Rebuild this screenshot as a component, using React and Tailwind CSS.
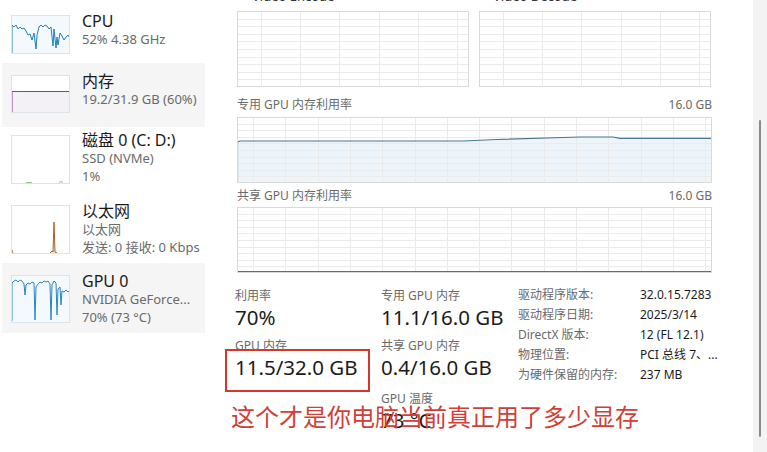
import React from 'react';

const FONT = "font-['Noto_Sans','Noto_Sans_CJK_SC',sans-serif]";

// light grid used by every graph on the GPU page
const Grid = ({ w, h, offset, step, rows = 10, children, under }) => {
  const vx = [];
  for (let x = offset; x < w - 1; x += step) vx.push(Math.round(x) + 0.5);
  const hy = [];
  for (let i = 1; i < rows; i++) hy.push(Math.round((h * i) / rows) + 0.5);
  return (
    <svg width={w} height={h} className="block">
      {under}
      {hy.map((y) => (
        <line key={'h' + y} x1="0" x2={w} y1={y} y2={y} stroke="#ebebeb" strokeWidth="1" />
      ))}
      {vx.map((x) => (
        <line key={'v' + x} x1={x} x2={x} y1="0" y2={h} stroke="#ebebeb" strokeWidth="1" />
      ))}
      {children}
      <rect x="0.5" y="0.5" width={w - 1} height={h - 1} fill="none" stroke="#d9d9d9" />
    </svg>
  );
};

const Thumb = ({ h, className, children }) => (
  <svg width="59" height={h} className={`block shrink-0 ${className}`}>
    {children}
    <rect x="0.5" y="0.5" width="58" height={h - 1} fill="none" stroke="#dde3e8" />
  </svg>
);

const cpuPts = '1,39 1,10 3,12 5,10 7,14 9,12 11,14 13,13 15,16 17,20 19,19 21,25 23,18 25,34 26,20 28,12 30,10 32,12 34,10 36,11 38,14 40,12 42,31 43,14 45,33 46,22 47,30 49,18 51,21 53,25 55,22 57,20 58,22';
const gpuPts = '1,46 1,8 3,6 5,5 7,7 9,5 11,6 13,9 14,20 15,10 17,8 19,9 21,7 23,8 24,45 25,12 27,9 29,7 31,8 33,6 35,7 37,6 39,9 40,45 41,10 43,6 45,8 46,40 47,14 49,12 50,30 51,16 53,17 55,15 57,17 58,16';

const items = [
  {
    title: 'CPU',
    sub: ['52% 4.38 GHz'],
    box: 'h-[63px]',
    thumbMt: 'mt-[15px]',
    textMt: 'mt-[12px]',
    thumb: (
      <Thumb h={39} className="bg-[#f4f9fd]">
        <polyline points={cpuPts} fill="none" stroke="#1f80b8" strokeWidth="1" />
      </Thumb>
    ),
  },
  {
    title: '内存',
    sub: ['19.2/31.9 GB (60%)'],
    box: 'h-[64px] bg-[#f5f5f5]',
    thumbMt: 'mt-[12px]',
    textMt: 'mt-[9px]',
    thumb: (
      <Thumb h={38} className="bg-white">
        <rect x="1" y="16" width="57" height="21" fill="#f3f1f5" />
        <polyline points="1,38 1,16.5 58,16.5" fill="none" stroke="#8b3d9e" strokeWidth="1" />
      </Thumb>
    ),
  },
  {
    title: '磁盘 0 (C: D:)',
    sub: ['SSD (NVMe)', '1%'],
    box: 'h-[70px]',
    thumbMt: 'mt-[8px]',
    textMt: 'mt-[4px]',
    thumb: (
      <Thumb h={49} className="bg-white">
        <polyline points="15,47.5 17,47.5 21,47.5" fill="none" stroke="#9bbf8a" strokeWidth="1" />
        <polyline points="48,47.5 50,46.5 52,47.5" fill="none" stroke="#9bbf8a" strokeWidth="1" />
      </Thumb>
    ),
  },
  {
    title: '以太网',
    sub: ['以太网', '发送: 0 接收: 0 Kbps'],
    box: 'h-[66px]',
    thumbMt: 'mt-[8px]',
    textMt: 'mt-[5px]',
    thumb: (
      <Thumb h={49} className="bg-white">
        <polyline points="1,48 1,45 2,48" fill="none" stroke="#c98a55" strokeWidth="1" />
        <polyline points="39,48 41,46 42,47 43,17 44,47 46,48" fill="#f3e3d3" stroke="#a8622a" strokeWidth="1" />
      </Thumb>
    ),
  },
  {
    title: 'GPU 0',
    sub: ['NVIDIA GeForce...', '70% (73 °C)'],
    box: 'h-[70px] bg-[#f5f5f5]',
    thumbMt: 'mt-[12px]',
    textMt: 'mt-[9px]',
    thumb: (
      <Thumb h={48} className="bg-[#f4f9fd]">
        <polyline points={gpuPts} fill="none" stroke="#2a86bf" strokeWidth="1" />
      </Thumb>
    ),
  },
];

const Sidebar = () => (
  <div className="w-[205px] shrink-0">
    {items.map((it) => (
      <div key={it.title} className={`ml-[2px] flex pl-[9px] gap-[12px] ${it.box}`}>
        <div className={it.thumbMt}>{it.thumb}</div>
        <div className={it.textMt}>
          <div className="text-[16px] leading-[18px] text-[#1a1a1a]">{it.title}</div>
          {it.sub.map((s) => (
            <div key={s} className="text-[13px] leading-[18px] text-[#6a6a6a] whitespace-nowrap">{s}</div>
          ))}
        </div>
      </div>
    ))}
  </div>
);

const dedicatedPts = '0.5,66 0.5,25 3,24 226,24 260,22.5 326,20.5 343,20 376,20 383,21.3 475,21.3';

const Stat = ({ label, value, className = '' }) => (
  <div className={className}>
    <div className="text-[12px] leading-[16px] text-[#6a6a6a]">{label}</div>
    <div className="text-[20.5px] leading-[26px] text-[#1b1b1b] whitespace-nowrap">{value}</div>
  </div>
);

const details = [
  ['驱动程序版本:', '32.0.15.7283'],
  ['驱动程序日期:', '2025/3/14'],
  ['DirectX 版本:', '12 (FL 12.1)'],
  ['物理位置:', 'PCI 总线 7、...'],
  ['为硬件保留的内存:', '237 MB'],
];

export default function App() {
  return (
    <div className={`relative flex w-[767px] h-[452px] overflow-hidden bg-white ${FONT}`}>
      <Sidebar />

      <div className="flex-1 pl-[32px]">
        <div className="w-[475px]">
          {/* engine graphs (scrolled, titles cut off) */}
          <div className="-mt-[12px] flex gap-[10px] text-[13px] leading-[16px] text-[#333]">
            <div className="w-[232px] pl-[15px]">Video Encode</div>
            <div className="w-[232px] pl-[14px]">Video Decode</div>
          </div>
          <div className="mt-[7px] flex gap-[10px]">
            <Grid w={232} h={76} offset={24} step={39.2} />
            <Grid w={232} h={76} offset={24} step={39.2} />
          </div>

          <div className="mt-[10px] flex justify-between text-[12px] leading-[16px] text-[#6a6a6a]">
            <span>专用 GPU 内存利用率</span>
            <span>16.0 GB</span>
          </div>
          <div className="mt-[4px]">
            <Grid
              w={475}
              h={66}
              offset={16}
              step={32.3}
              under={<polygon points={dedicatedPts + ' 475,66'} fill="#edf5fb" />}
            >
              <polyline points={dedicatedPts} fill="none" stroke="#4a7591" strokeWidth="1.2" />
            </Grid>
          </div>

          <div className="mt-[5px] flex justify-between text-[12px] leading-[16px] text-[#6a6a6a]">
            <span>共享 GPU 内存利用率</span>
            <span>16.0 GB</span>
          </div>
          <div className="mt-[3px]">
            <Grid w={475} h={66} offset={16} step={32.3}>
              <line x1="0" x2="475" y1="64.5" y2="64.5" stroke="#4a7591" strokeWidth="1.2" />
            </Grid>
          </div>

          {/* stats */}
          <div className="mt-[15px] -ml-[2px] flex items-start">
            <div className="w-[146px] shrink-0">
              <Stat label="利用率" value="70%" />
              <Stat label="GPU 内存" value="11.5/32.0 GB" className="mt-[8px]" />
            </div>
            <div className="w-[137px] shrink-0">
              <Stat label="专用 GPU 内存" value="11.1/16.0 GB" />
              <Stat label="共享 GPU 内存" value="0.4/16.0 GB" className="mt-[8px]" />
              <Stat label="GPU 温度" value="73 °C" className="mt-[11px]" />
            </div>
            <div className="-mt-[3px] shrink-0 text-[12px] leading-[20px]">
              {details.map(([k, v]) => (
                <div key={k} className="flex">
                  <span className="w-[122px] text-[#6a6a6a]">{k}</span>
                  <span className="text-[#1b1b1b] whitespace-nowrap">{v}</span>
                </div>
              ))}
            </div>
          </div>
        </div>
      </div>

      {/* scrollbar */}
      <div className="w-[14px] shrink-0 bg-[#f3f3f3] flex justify-center">
        <div className="mt-[120px] h-[317px] w-[2px] rounded-full bg-[#8a8a8a]" />
      </div>

      {/* annotation drawn over the screenshot */}
      <div className="absolute left-[225px] top-[349px] w-[145px] h-[43px] border-2 border-[#d8362c]" />
      <div className="absolute left-[231px] top-[404px] text-[24px] leading-[24px] text-[#cf4038] font-['Noto_Sans_CJK_SC',sans-serif] whitespace-nowrap">
        这个才是你电脑当前真正用了多少显存
      </div>
    </div>
  );
}
